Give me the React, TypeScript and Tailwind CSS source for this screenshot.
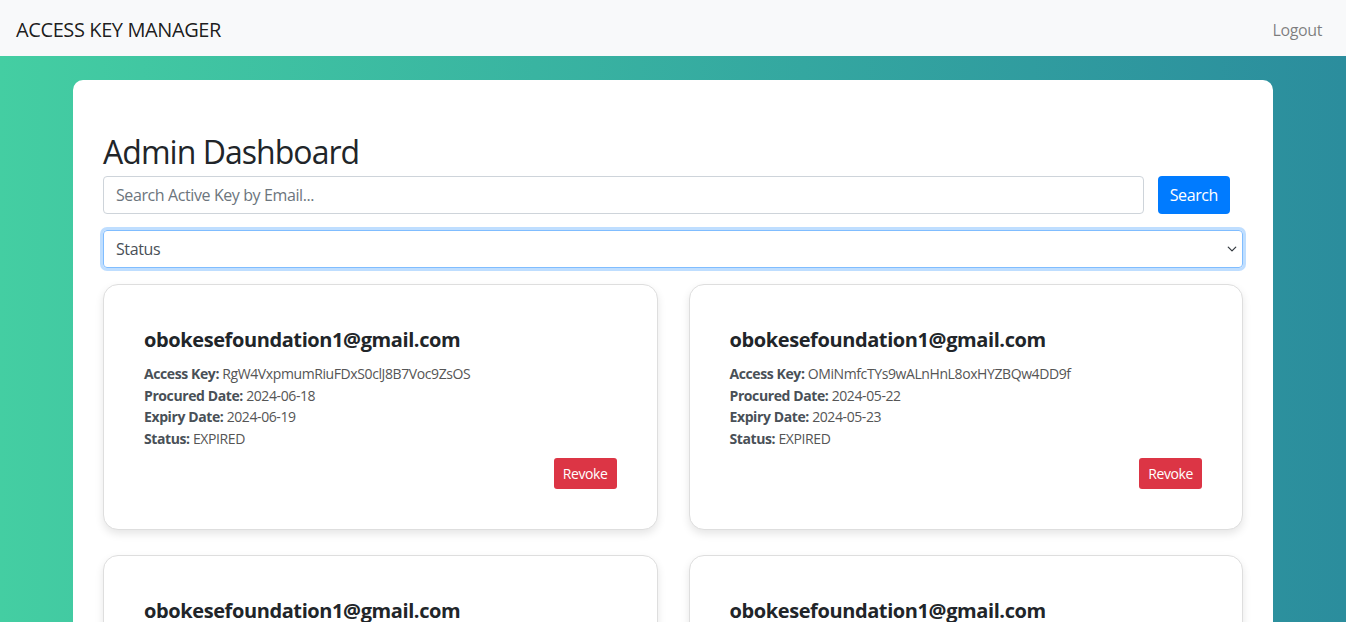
import React from "react";

type KeyItem = {
  email: string;
  key: string;
  procured: string;
  expiry: string;
  status: string;
};

const keys: KeyItem[] = [
  {
    email: "obokesefoundation1@gmail.com",
    key: "RgW4VxpmumRiuFDxS0clJ8B7Voc9ZsOS",
    procured: "2024-06-18",
    expiry: "2024-06-19",
    status: "EXPIRED",
  },
  {
    email: "obokesefoundation1@gmail.com",
    key: "OMiNmfcTYs9wALnHnL8oxHYZBQw4DD9f",
    procured: "2024-05-22",
    expiry: "2024-05-23",
    status: "EXPIRED",
  },
  {
    email: "obokesefoundation1@gmail.com",
    key: "Xk2LqP0vRtY7sNmBc4HdWe9FgJ1aZuIo",
    procured: "2024-05-20",
    expiry: "2024-05-21",
    status: "EXPIRED",
  },
  {
    email: "obokesefoundation1@gmail.com",
    key: "Hq8TzVn3KpLs5WmRb2YcJd7FxG0eAuNi",
    procured: "2024-05-18",
    expiry: "2024-05-19",
    status: "EXPIRED",
  },
];

function KeyCard({ item }: { item: KeyItem }) {
  return (
    <div className="flex flex-col rounded-[15px] border border-[#dedede] bg-white p-10 shadow-[0_4px_8px_rgba(0,0,0,0.1)]">
      <h5 className="mt-[3px] mb-[11px] text-[20px] leading-6 font-bold text-[#212529]">{item.email}</h5>
      <div className="text-[14px] leading-[21.5px] text-[#555]">
        <p>
          <span className="font-bold text-[#495057]">Access Key:</span> {item.key}
        </p>
        <p>
          <span className="font-bold text-[#495057]">Procured Date:</span> {item.procured}
        </p>
        <p>
          <span className="font-bold text-[#495057]">Expiry Date:</span> {item.expiry}
        </p>
        <p>
          <span className="font-bold text-[#495057]">Status:</span> {item.status}
        </p>
      </div>
      <div className="mt-[9px] flex justify-end">
        <button className="h-[31px] rounded-[3px] bg-[#dc3545] px-[9px] text-[14px] text-white">
          Revoke
        </button>
      </div>
    </div>
  );
}

export default function App() {
  return (
    <div
      className="min-h-screen bg-gradient-to-r from-[#44cea2] to-[#2b8d9d] tracking-[-0.025em] text-[#212529]"
      style={{ fontFamily: '"Open Sans", "Noto Sans", sans-serif' }}
    >
      <nav className="flex h-14 items-center justify-between bg-[#f8f9fa] px-4 pt-1">
        <span className="text-[20px] text-[rgba(0,0,0,0.9)]">ACCESS KEY MANAGER</span>
        <a className="px-2 text-[16px] text-[rgba(0,0,0,0.5)]">Logout</a>
      </nav>

      <div className="px-[73px] pt-6">
        <div className="rounded-[10px] bg-white px-[30px] pt-[53px] pb-10">
          <h2 className="mb-[5px] text-[32px] leading-[38px] font-normal tracking-[-0.03em]">Admin Dashboard</h2>

          <div className="flex items-center">
            <input
              className="h-[38px] flex-1 rounded-[4px] border border-[#ced4da] px-3 text-[16px] placeholder:text-[#6c757d] outline-none"
              placeholder="Search Active Key by Email..."
            />
            <button className="mr-[13px] ml-[14px] h-[38px] rounded-[4px] bg-[#007bff] px-3 text-[16px] text-white">
              Search
            </button>
          </div>

          <div className="relative mt-4">
            <div className="flex h-[38px] items-center rounded-[4px] border border-[#80bdff] px-3 text-[16px] text-[#495057] shadow-[0_0_0_3px_rgba(0,123,255,0.25)]">
              Status
            </div>
            <svg
              className="absolute top-[14px] right-[5px]"
              width="12"
              height="10"
              viewBox="0 0 16 16"
              fill="none"
              stroke="#343a40"
              strokeWidth="2"
              strokeLinecap="round"
              strokeLinejoin="round"
            >
              <path d="m2 5 6 6 6-6" />
            </svg>
          </div>

          <div className="mt-4 grid grid-cols-2 gap-x-[31px] gap-y-[25px]">
            {keys.map((k, i) => (
              <KeyCard key={i} item={k} />
            ))}
          </div>
        </div>
      </div>
    </div>
  );
}
